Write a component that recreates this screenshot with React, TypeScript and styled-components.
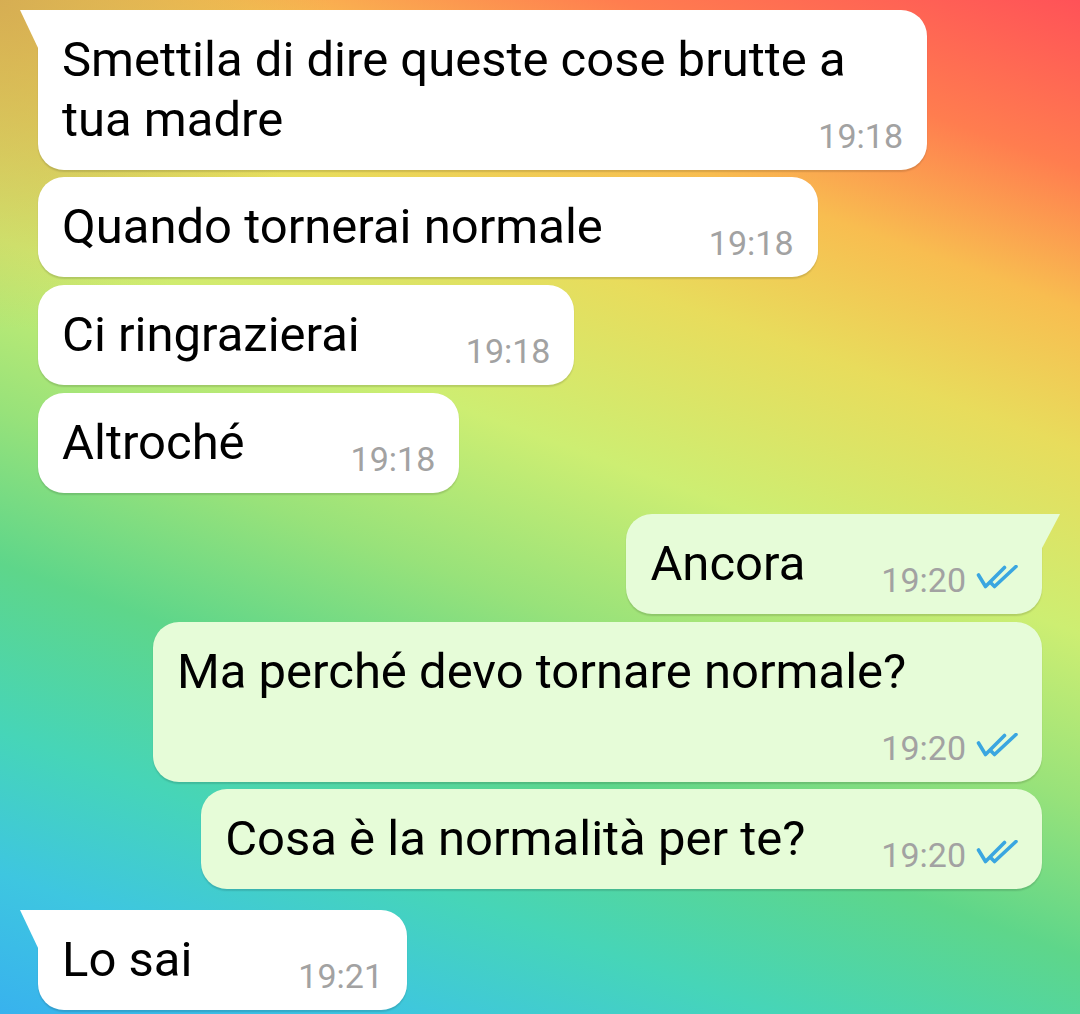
import React from 'react';
import styled, { createGlobalStyle, css } from 'styled-components';

const Global = createGlobalStyle`
  html, body { margin: 0; padding: 0; }
  body {
    width: 1080px;
    height: 1014px;
    overflow: hidden;
    font-family: Roboto, "Noto Sans", "Liberation Sans", sans-serif;
  }
`;

const Screen = styled.div`
  width: 1080px;
  height: 1014px;
  box-sizing: border-box;
  padding: 10px 38px 0;
  display: flex;
  flex-direction: column;
  overflow: hidden;
  background:
    radial-gradient(circle at 0 0, rgba(210, 168, 82, 0.85) 0, rgba(210, 168, 82, 0) 330px),
    linear-gradient(200deg, #ff5258 0%, #ff7d4f 12%, #f8bd50 22%, #e8dc5c 32%, #cdee72 45%, #98e27a 57%, #5ed68a 68%, #46d5b8 80%, #3ec6e0 90%, #38b2ee 100%);
`;

const inTail = css`
  border-top-left-radius: 0;
  &::before {
    content: '';
    position: absolute;
    top: 0;
    left: -18px;
    width: 19px;
    height: 40px;
    background: inherit;
    clip-path: polygon(0 0, 100% 0, 100% 100%);
  }
`;

const outTail = css`
  border-top-right-radius: 0;
  &::before {
    content: '';
    position: absolute;
    top: 0;
    right: -18px;
    width: 19px;
    height: 36px;
    background: inherit;
    clip-path: polygon(0 0, 100% 0, 0 100%);
  }
`;

const Bubble = styled.div<{ $out?: boolean; $tail?: boolean; $gap: number }>`
  position: relative;
  align-self: ${(p) => (p.$out ? 'flex-end' : 'flex-start')};
  display: flow-root;
  max-width: 841px;
  margin-top: ${(p) => p.$gap}px;
  padding: 20px 24px 18px;
  background: ${(p) => (p.$out ? '#e6fcd8' : '#ffffff')};
  border-radius: 26px;
  box-shadow: 0 1.5px 1.5px rgba(0, 0, 0, 0.13);
  font-size: 49px;
  line-height: 60px;
  color: #000;
  ${(p) => (p.$tail ? (p.$out ? outTail : inTail) : '')}
`;

const Meta = styled.span<{ $out?: boolean }>`
  float: right;
  display: block;
  margin: 30px 0 0 ${(p) => (p.$out ? 76 : 106)}px;
  font-size: 34px;
  line-height: 32px;
  color: #a2a2a2;
  white-space: nowrap;
`;

const Check = styled.svg`
  display: inline-block;
  vertical-align: 3px;
  margin-left: 8px;
`;

const DoubleCheck = () => (
  <Check width="44" height="24" viewBox="0 0 44 24" fill="none">
    <path d="M4.5 10 L11.5 21.5 L30.5 2.5" stroke="#3aa6e0" strokeWidth="3.6" strokeLinecap="round" strokeLinejoin="round" />
    <path d="M17.5 18.5 L20.5 21.5 L42 1.5" stroke="#3aa6e0" strokeWidth="3.6" strokeLinecap="round" strokeLinejoin="round" />
  </Check>
);

type Msg = { text: string; time: string; out?: boolean; tail?: boolean; gap: number };

const messages: Msg[] = [
  { text: 'Smettila di dire queste cose brutte a tua madre', time: '19:18', tail: true, gap: 0 },
  { text: 'Quando tornerai normale', time: '19:18', gap: 7 },
  { text: 'Ci ringrazierai', time: '19:18', gap: 8 },
  { text: 'Altroché', time: '19:18', gap: 8 },
  { text: 'Ancora', time: '19:20', out: true, tail: true, gap: 21 },
  { text: 'Ma perché devo tornare normale?', time: '19:20', out: true, gap: 8 },
  { text: 'Cosa è la normalità per te?', time: '19:20', out: true, gap: 7 },
  { text: 'Lo sai', time: '19:21', tail: true, gap: 21 },
];

export default function App() {
  return (
    <>
      <Global />
      <Screen>
        {messages.map((m, i) => (
          <Bubble key={i} $out={m.out} $tail={m.tail} $gap={m.gap}>
            {m.text}
            <Meta $out={m.out}>
              {m.time}
              {m.out && <DoubleCheck />}
            </Meta>
          </Bubble>
        ))}
      </Screen>
    </>
  );
}
